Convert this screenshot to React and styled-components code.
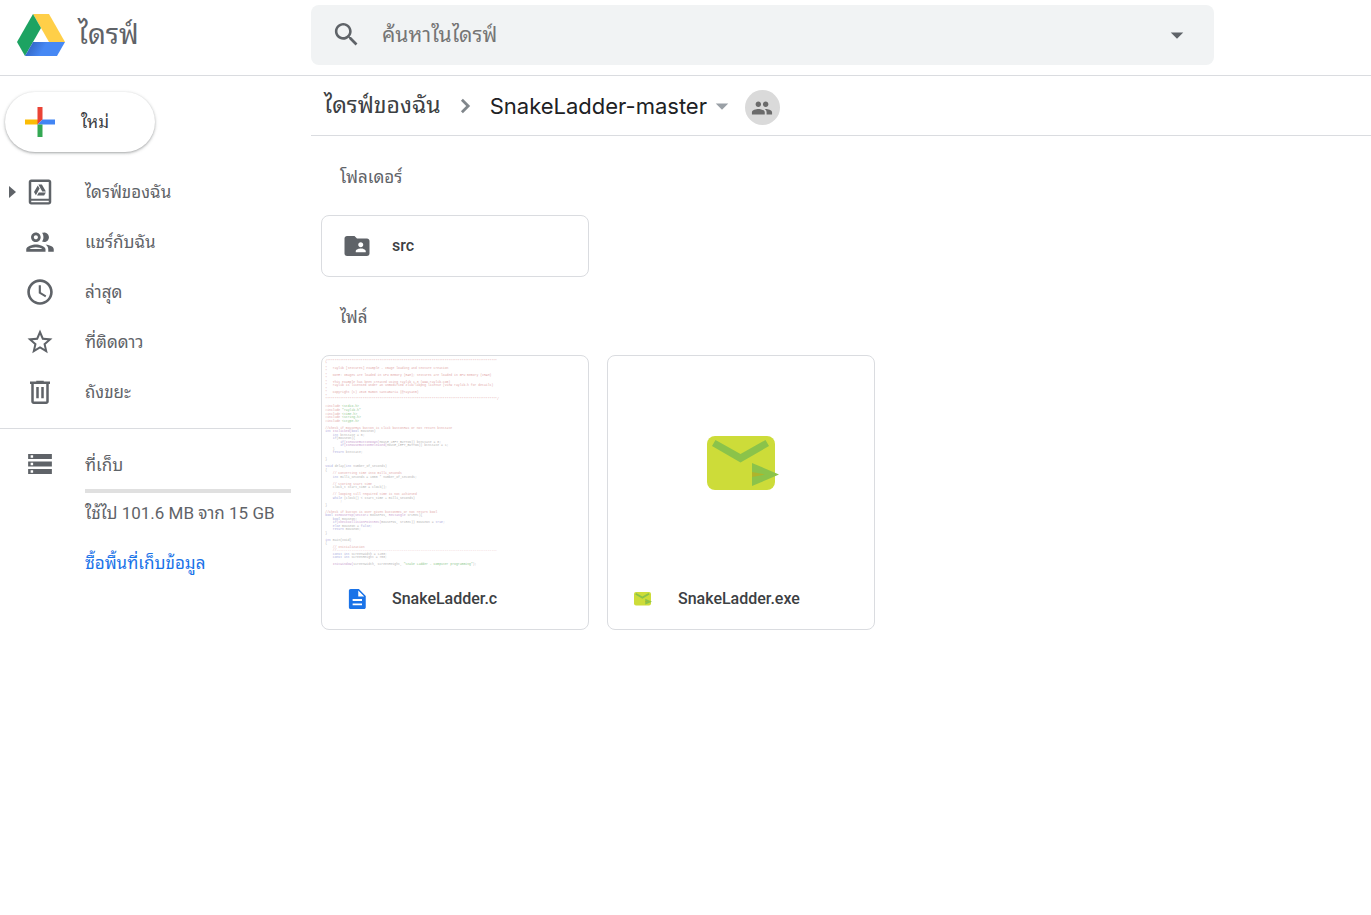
import React from 'react';
import styled, { createGlobalStyle } from 'styled-components';

const GlobalStyle = createGlobalStyle`
  *, *::before, *::after { box-sizing: border-box; }
  body {
    margin: 0;
    background: #fff;
    color: #5f6368;
    font-family: Roboto, Tahoma, "Noto Sans Thai Looped", Loma, Waree, Umpush, Garuda, "Noto Sans Thai", "Noto Sans", sans-serif;
    font-size: 17px;
    line-height: 24px;
  }
  button, input { font: inherit; color: inherit; }
  svg { display: block; flex: none; }
`;

const Header = styled.header`
  display: flex;
  align-items: center;
  height: 76px;
  padding: 0 0 6px 17px;
  border-bottom: 1px solid #dadce0;
`;

const Brand = styled.a`
  display: flex;
  align-items: center;
  gap: 13px;
  width: 294px;
  flex: none;
  color: #5f6368;
  font-size: 28px;
  line-height: 40px;
  text-decoration: none;
`;

const SearchForm = styled.form`
  display: flex;
  align-items: center;
  flex: 1;
  height: 60px;
  margin-right: 157px;
  padding: 0 22px 0 20px;
  border-radius: 8px;
  background: #f1f3f4;
`;

const SearchInput = styled.input`
  flex: 1;
  min-width: 0;
  margin-left: 20px;
  padding: 0;
  border: 0;
  outline: 0;
  background: transparent;
  font-size: 21px;
  &::placeholder { color: #757575; opacity: 1; }
`;

const IconButton = styled.button`
  display: flex;
  padding: 0;
  border: 0;
  background: transparent;
  cursor: pointer;
`;

const Body = styled.div`
  display: flex;
  gap: 20px;
`;

const Sidebar = styled.aside`
  width: 291px;
  flex: none;
`;

const NewButton = styled.button`
  display: flex;
  align-items: center;
  gap: 26px;
  width: 150px;
  height: 60px;
  margin: 16px 0 15px 5px;
  padding: 0 0 0 20px;
  border: 0;
  border-radius: 30px;
  background: #fff;
  box-shadow: 0 1px 2px rgba(60, 64, 67, 0.3), 0 1px 3px 1px rgba(60, 64, 67, 0.15);
  color: #3c4043;
  font-size: 17px;
  cursor: pointer;
`;

const NavList = styled.ul`
  margin: 0;
  padding: 0 0 11px;
  border-bottom: 1px solid #dadce0;
  list-style: none;
`;

const NavLink = styled.a`
  display: grid;
  grid-template-columns: 17px 58px 1fr;
  align-items: center;
  column-gap: 2px;
  height: 50px;
  padding-left: 6px;
  color: #5f6368;
  text-decoration: none;
`;

const NavIcon = styled.span`
  grid-column: 2;
`;

const Storage = styled.section`
  display: grid;
  grid-template-columns: 60px 1fr;
  padding: 20px 0 0 25px;
`;

const StorageText = styled.div`
  display: flex;
  flex-direction: column;
  padding-top: 4px;
`;

const Meter = styled.div`
  height: 4px;
  margin: 12px 0 8px;
  background: #e0e0e0;
`;

const BuyLink = styled.a`
  margin-top: 26px;
  color: #1a73e8;
  text-decoration: none;
`;

const Main = styled.main`
  flex: 1;
  min-width: 0;
`;

const Breadcrumb = styled.nav`
  display: flex;
  align-items: center;
  height: 60px;
  padding-left: 13px;
  border-bottom: 1px solid #dadce0;
`;

const Crumb = styled.a`
  color: ${(p) => (p.$current ? '#202124' : '#3c4043')};
  font-family: ${(p) => (p.$current ? 'Inter, sans-serif' : 'inherit')};
  font-size: ${(p) => (p.$current ? '22px' : '23px')};
  line-height: 32px;
  text-decoration: none;
`;

const Chevron = styled.span`
  margin: 0 11px 0 10px;
`;

const ShareButton = styled(IconButton)`
  align-items: center;
  justify-content: center;
  width: 35px;
  height: 35px;
  margin: 4px 0 0 8px;
  border-radius: 50%;
  background: #dadada;
`;

const Content = styled.div`
  padding: 29px 10px;
`;

const SectionTitle = styled.h2`
  margin: 0 0 26px;
  padding-left: 19px;
  font-size: 17px;
  font-weight: 400;
  line-height: 24px;
`;

const Grid = styled.div`
  display: grid;
  grid-template-columns: repeat(auto-fill, 268px);
  gap: 18px;
  margin-bottom: 28px;
`;

const Card = styled.article`
  overflow: hidden;
  border: 1px solid #dadce0;
  border-radius: 8px;
  color: #3c4043;
  font-size: 16px;
  font-weight: 500;
`;

const Preview = styled.div`
  display: flex;
  align-items: center;
  justify-content: center;
  height: 213px;
`;

const CardLabel = styled.div`
  display: grid;
  grid-template-columns: 30px 1fr;
  align-items: center;
  column-gap: 20px;
  height: 60px;
  padding-left: 20px;
  svg { justify-self: center; }
`;

const CodeSheet = styled.svg`
  width: 100%;
  height: 100%;
  font-family: "Liberation Mono", monospace;
  font-size: 16px;
  font-weight: 400;
  text { white-space: pre; }
`;

const Icon = ({ size = 30, color = '#5f6368', children }) => (
  <svg width={size} height={size} viewBox="0 0 24 24" fill={color} aria-hidden="true">{children}</svg>
);

const DriveLogo = () => (
  <svg width="48" height="42" viewBox="0 0 48 42" aria-hidden="true">
    <defs>
      <linearGradient id="fold" gradientUnits="userSpaceOnUse" x1="11" y1="34" x2="23" y2="41">
        <stop offset="0" stopColor="#3367c6" />
        <stop offset="1" stopColor="#4688f4" />
      </linearGradient>
    </defs>
    <path d="M16 0h16l16 28H32z" fill="#ffcf48" />
    <path d="M16 0L0 28l8 14 16-28z" fill="#1da362" />
    <path d="M8 42l8-14h32l-8 14z" fill="url(#fold)" />
  </svg>
);

const Plus = () => (
  <svg width="30" height="30" viewBox="0 0 30 30" aria-hidden="true">
    <path d="M0 12.500h13v5H0z" fill="#fbbc04" />
    <path d="M12.500 0h5v12.500l-5 5z" fill="#ea4335" />
    <path d="M17.500 12.500H30v5H12.500z" fill="#4285f4" />
    <path d="M12.500 17.500h5V30h-5z" fill="#34a853" />
  </svg>
);

const Mail = ({ width, inset = 0 }) => (
  <svg width={width} height={width * 54 / (72 + inset)} viewBox={`${-inset} 0 ${72 + inset} 54`} aria-hidden="true">
    <rect width="68" height="54" rx="8" fill="#cddc39" />
    <path d="M8.500 4 33.500 18 58.500 4 62 10 33.500 26.500 5 10z" fill="#8bc34a" />
    <path d="M45 27l27 11.500L45 50z" fill="#8bc34a" />
    <path d="M45 36l13 2.500L45 41z" fill="#afb42b" />
  </svg>
);

const icons = {
  drive: (
    <>
      <path fillRule="evenodd" d="M19 2H5c-1.100 0-2 .9-2 2v16c0 1.100.9 2 2 2h14c1.100 0 2-.9 2-2V4c0-1.100-.9-2-2-2zm0 18.200H5v-1.200h14zm0-2.800H5V4h14z" />
      <path d="M10.700 6h2.800l3.200 5.600h-2.900zM10.200 6.700l1.500 2.500-3 5.400-1.500-2.600zM11 12.300h5.700l-1.400 2.400H9.600z" />
    </>
  ),
  shared: <path d="M9 13.750c-2.340 0-7 1.170-7 3.500V19h14v-1.750c0-2.330-4.660-3.500-7-3.500zM4.340 17c.84-.58 2.870-1.250 4.660-1.250s3.820.67 4.660 1.250H4.340zM9 12c1.930 0 3.500-1.570 3.500-3.500S10.930 5 9 5 5.500 6.570 5.500 8.500 7.070 12 9 12zm0-5c.83 0 1.500.67 1.500 1.500S9.830 10 9 10s-1.500-.67-1.500-1.500S8.170 7 9 7zm7.040 6.810c1.160.84 1.960 1.960 1.960 3.440V19h4v-1.750c0-2.020-3.500-3.170-5.960-3.440zM15 12c1.930 0 3.500-1.570 3.500-3.500S16.930 5 15 5c-.54 0-1.040.13-1.500.35.63.89 1 1.980 1 3.150s-.37 2.260-1 3.150c.46.22.96.35 1.500.35z" transform="translate(-1.200 -1.200) scale(1.100)" />,
  recent: <path d="M11.990 1.800C6.470 1.800 1.800 6.480 1.800 12s4.670 10.200 10.190 10.200C17.520 22.200 22.200 17.520 22.200 12S17.520 1.800 11.990 1.800zM12 20.100c-4.500 0-8.100-3.600-8.100-8.100S7.500 3.900 12 3.900s8.100 3.600 8.100 8.100-3.600 8.100-8.100 8.100zM12.700 6.500H11v6.500l5.250 3.150.75-1.430-4.300-2.570z" />,
  star: <path d="M22 9.240l-7.190-.62L12 2 9.190 8.630 2 9.240l5.460 4.730L5.820 21 12 17.270 18.180 21l-1.630-7.030L22 9.240zM12 15.400l-3.760 2.270 1-4.280-3.320-2.880 4.380-.38L12 6.100l1.710 4.040 4.380.38-3.320 2.880 1 4.280L12 15.400z" />,
  trash: <path fillRule="evenodd" d="M15 3.500V3H9v.5H4v2h1V19.500c0 1.100.9 2 2 2h10c1.100 0 2-.9 2-2v-14h1v-2zM7 5.500h10v14H7zM9 8h2v9H9zm4 0h2v9h-2z" />,
};

const navItems = [
  ['drive', 'ไดรฟ์ของฉัน'],
  ['shared', 'แชร์กับฉัน'],
  ['recent', 'ล่าสุด'],
  ['star', 'ที่ติดดาว'],
  ['trash', 'ถังขยะ'],
];

const RED = '#e3a9a9';
const GREEN = '#8fca8f';
const BLUE = '#a9a9dc';
const PURPLE = '#c9a2cf';
const GREY = '#b4b4b4';

const codeLines = [
  [[RED, '/' + '*'.repeat(91)]],
  [[RED, '*']],
  [[RED, '*   raylib [textures] example - Image loading and texture creation']],
  [[RED, '*']],
  [[RED, '*   NOTE: Images are loaded in CPU memory (RAM); textures are loaded in GPU memory (VRAM)']],
  [[RED, '*']],
  [[RED, '*   This example has been created using raylib 1.3 (www.raylib.com)']],
  [[RED, '*   raylib is licensed under an unmodified zlib/libpng license (View raylib.h for details)']],
  [[RED, '*']],
  [[RED, '*   Copyright (c) 2015 Ramon Santamaria (@raysan5)']],
  [[RED, '*']],
  [[RED, '*'.repeat(92) + '/']],
  [],
  [[RED, '#include '], [GREEN, '<stdio.h>']],
  [[RED, '#include '], [GREEN, '"raylib.h"']],
  [[RED, '#include '], [GREEN, '<time.h>']],
  [[RED, '#include '], [GREEN, '<string.h>']],
  [[RED, '#include '], [GREEN, '<ctype.h>']],
  [],
  [[RED, '//Check if mouseHas button is click buttonHas or not return btnState']],
  [[BLUE, 'int '], [PURPLE, 'IsClicked('], [BLUE, 'bool '], [GREY, 'mouseOn)']],
  [[BLUE, '    int '], [GREY, 'btnState = 0;']],
  [[BLUE, '    if'], [GREY, '(mouseOn){']],
  [[BLUE, '        if'], [PURPLE, '(IsMouseButtonDown('], [GREY, 'MOUSE_LEFT_BUTTON)) btnState = 0;']],
  [[BLUE, '        if'], [PURPLE, '(IsMouseButtonReleased('], [GREY, 'MOUSE_LEFT_BUTTON)) btnState = 1;']],
  [[GREY, '    }']],
  [[BLUE, '    return '], [GREY, 'btnState;']],
  [],
  [[GREY, '}']],
  [],
  [[BLUE, 'void '], [GREY, 'delay('], [BLUE, 'int '], [GREY, 'number_of_seconds)']],
  [[GREY, '{']],
  [[RED, '    // Converting time into milli_seconds']],
  [[BLUE, '    int '], [GREY, 'milli_seconds = 1000 * number_of_seconds;']],
  [],
  [[RED, '    // Storing start time']],
  [[GREY, '    clock_t start_time = clock();']],
  [],
  [[RED, '    // looping till required time is not achieved']],
  [[BLUE, '    while '], [GREY, '(clock() < start_time + milli_seconds)']],
  [[GREY, '        ;']],
  [[GREY, '}']],
  [],
  [[RED, '//Check if button is over given buttonRec or not return bool']],
  [[BLUE, 'bool '], [PURPLE, 'IsMouseTop(Vector2 '], [GREY, 'mousePos, '], [PURPLE, 'Rectangle '], [GREY, 'srcRec){']],
  [[BLUE, '    bool '], [GREY, 'mouseOn;']],
  [[BLUE, '    if'], [PURPLE, '(CheckCollisionPointRec('], [GREY, 'mousePos, srcRec)) mouseOn = '], [BLUE, 'true;']],
  [[BLUE, '    else '], [GREY, 'mouseOn = '], [BLUE, 'false;']],
  [[BLUE, '    return '], [GREY, 'mouseOn;']],
  [[GREY, '}']],
  [],
  [[BLUE, 'int '], [GREY, 'main(void)']],
  [[GREY, '{']],
  [[RED, '    // Initialization']],
  [[RED, '    //' + '-'.repeat(86)]],
  [[BLUE, '    const int '], [GREY, 'screenWidth = 1200;']],
  [[BLUE, '    const int '], [GREY, 'screenHeight = 700;']],
  [],
  [[PURPLE, '    InitWindow('], [GREY, 'screenWidth, screenHeight, '], [GREEN, '"Snake Ladder - Computer programming"'], [GREY, ');']],
];

const CodePreview = () => (
  <CodeSheet viewBox="0 0 1364 1087" preserveAspectRatio="xMinYMin meet" aria-hidden="true">
    {codeLines.map((line, i) => (
      <text key={i} x="17" y={30 + i * 18} xmlSpace="preserve">
        {line.map(([color, text], j) => <tspan key={j} fill={color}>{text}</tspan>)}
      </text>
    ))}
  </CodeSheet>
);

export default function App() {
  return (
    <>
      <GlobalStyle />
      <Header>
        <Brand href="#"><DriveLogo />ไดรฟ์</Brand>
        <SearchForm role="search">
          <IconButton type="button" aria-label="ค้นหา">
            <Icon size={31}>
              <path d="M15.500 14h-.79l-.28-.27C15.410 12.590 16 11.110 16 9.500 16 5.910 13.090 3 9.500 3S3 5.910 3 9.500 5.910 16 9.500 16c1.610 0 3.090-.59 4.230-1.570l.27.28v.79l5 4.990L20.490 19l-4.990-5zm-6 0C7.010 14 5 11.990 5 9.500S7.010 5 9.500 5 14 7.010 14 9.500 11.990 14 9.500 14z" />
            </Icon>
          </IconButton>
          <SearchInput type="text" aria-label="ค้นหาในไดรฟ์" placeholder="ค้นหาในไดรฟ์" />
          <IconButton type="button" aria-label="ตัวเลือกการค้นหา">
            <Icon size={30}><path d="M7 10l5 5 5-5z" /></Icon>
          </IconButton>
        </SearchForm>
      </Header>
      <Body>
        <Sidebar>
          <NewButton type="button"><Plus />ใหม่</NewButton>
          <NavList>
            {navItems.map(([icon, label]) => (
              <li key={icon}>
                <NavLink href="#">
                  {icon === 'drive' && (
                    <svg width="12" height="12" viewBox="0 0 12 12" fill="#5f6368" aria-hidden="true"><path d="M3 0l7 6-7 6z" /></svg>
                  )}
                  <NavIcon><Icon>{icons[icon]}</Icon></NavIcon>
                  <span>{label}</span>
                </NavLink>
              </li>
            ))}
          </NavList>
          <Storage>
            <Icon size={30}><path fillRule="evenodd" d="M2.500 20h19v-4h-19zM4.500 17h2v2h-2zM2.500 4v4h19V4zm4 3h-2V5h2zM2.500 14h19v-4h-19zM4.500 11h2v2h-2z" /></Icon>
            <StorageText>
              <span>ที่เก็บ</span>
              <Meter />
              <span>ใช้ไป 101.6 MB จาก 15 GB</span>
              <BuyLink href="#">ซื้อพื้นที่เก็บข้อมูล</BuyLink>
            </StorageText>
          </Storage>
        </Sidebar>
        <Main>
          <Breadcrumb>
            <Crumb href="#">ไดรฟ์ของฉัน</Crumb>
            <Chevron>
              <Icon size={28} color="#80868b"><path d="M10.200 5.800L8.500 7.500 13 12l-4.500 4.500 1.700 1.700L16.400 12z" /></Icon>
            </Chevron>
            <Crumb href="#" $current>SnakeLadder-master</Crumb>
            <IconButton type="button" aria-label="เมนูโฟลเดอร์">
              <Icon size={30} color="#9aa0a6"><path d="M7 10l5 5 5-5z" /></Icon>
            </IconButton>
            <ShareButton type="button" aria-label="จัดการการแชร์">
              <Icon size={22} color="#6b6b6b">
                <path d="M16 11c1.660 0 2.990-1.340 2.990-3S17.660 5 16 5c-1.660 0-3 1.340-3 3s1.340 3 3 3zm-8 0c1.660 0 2.990-1.340 2.990-3S9.660 5 8 5C6.340 5 5 6.340 5 8s1.340 3 3 3zm0 2c-2.330 0-7 1.170-7 3.500V19h14v-2.500c0-2.330-4.670-3.500-7-3.500zm8 0c-.29 0-.62.02-.97.05 1.160.84 1.970 1.970 1.970 3.450V19h6v-2.500c0-2.330-4.670-3.500-7-3.500z" />
              </Icon>
            </ShareButton>
          </Breadcrumb>
          <Content>
            <SectionTitle>โฟลเดอร์</SectionTitle>
            <Grid>
              <Card>
                <CardLabel>
                  <Icon size={30}>
                    <path d="M20 6h-8l-2-2H4c-1.100 0-1.990.9-1.990 2L2 18c0 1.100.9 2 2 2h16c1.100 0 2-.9 2-2V8c0-1.100-.9-2-2-2zm-5 3c1.100 0 2 .9 2 2s-.9 2-2 2-2-.9-2-2 .9-2 2-2zm4 8h-8v-1c0-1.330 2.670-2 4-2s4 .67 4 2v1z" />
                  </Icon>
                  <span>src</span>
                </CardLabel>
              </Card>
            </Grid>
            <SectionTitle>ไฟล์</SectionTitle>
            <Grid>
              <Card>
                <Preview><CodePreview /></Preview>
                <CardLabel>
                  <Icon size={30} color="#1a73e8">
                    <path fillRule="evenodd" d="M13.500 4H7c-1 0-1.500.6-1.500 1.500v13c0 .9.5 1.500 1.500 1.500h10.500c1 0 1.500-.6 1.500-1.500V9.500zM8.500 12h7.500v1.500H8.500zm0 3.500h7.500V17H8.500zM13 5.200V10h4.800z" />
                  </Icon>
                  <span>SnakeLadder.c</span>
                </CardLabel>
              </Card>
              <Card>
                <Preview><Mail width={76} inset={4} /></Preview>
                <CardLabel>
                  <Mail width={18} />
                  <span>SnakeLadder.exe</span>
                </CardLabel>
              </Card>
            </Grid>
          </Content>
        </Main>
      </Body>
    </>
  );
}
